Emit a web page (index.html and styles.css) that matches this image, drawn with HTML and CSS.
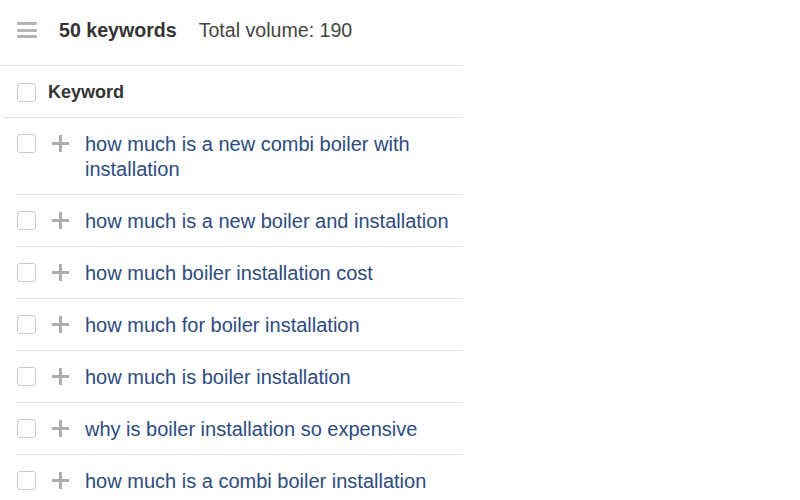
FILE: index.html
```html
<!DOCTYPE html>
<html lang="en">
<head>
    <meta charset="UTF-8">
    <title>Keywords</title>
    <link rel="stylesheet" href="styles.css">
</head>
<body>
    <div class="panel">
        <header class="toolbar">
            <span class="menu-icon"><span></span><span></span><span></span></span>
            <span class="count">50 keywords</span>
            <span class="volume">Total volume: 190</span>
        </header>
        <div class="table-head">
            <span class="check"></span>
            <span class="head-label">Keyword</span>
        </div>
        <ul class="keywords">
            <li><span class="check"></span><span class="plus"></span><a href="#">how much is a new combi boiler with installation</a></li>
            <li><span class="check"></span><span class="plus"></span><a href="#">how much is a new boiler and installation</a></li>
            <li><span class="check"></span><span class="plus"></span><a href="#">how much boiler installation cost</a></li>
            <li><span class="check"></span><span class="plus"></span><a href="#">how much for boiler installation</a></li>
            <li><span class="check"></span><span class="plus"></span><a href="#">how much is boiler installation</a></li>
            <li><span class="check"></span><span class="plus"></span><a href="#">why is boiler installation so expensive</a></li>
            <li><span class="check"></span><span class="plus"></span><a href="#">how much is a combi boiler installation</a></li>
        </ul>
    </div>
</body>
</html>
```
FILE: styles.css
```css
body {
    margin: 0;
    font-family: "Liberation Sans", Arial, sans-serif;
    background: #fff;
    color: #333;
}
.panel {
    width: 463px;
}
.toolbar {
    display: flex;
    align-items: center;
    box-sizing: border-box;
    height: 66px;
    padding: 0 0 5px 17px;
    border-bottom: 1px solid #e4e4e4;
    font-size: 19.6px;
}
.menu-icon {
    display: flex;
    flex-direction: column;
    justify-content: space-between;
    width: 20px;
    height: 16px;
    margin-right: 22px;
}
.menu-icon span {
    height: 3px;
    background: #b4b4b4;
    border-radius: 1px;
}
.count {
    font-weight: bold;
    color: #333;
    margin-right: 22px;
}
.volume {
    color: #444;
}
.table-head {
    display: flex;
    align-items: center;
    box-sizing: border-box;
    height: 52px;
    margin-left: 3px;
    padding: 2px 0 0 14px;
    border-bottom: 1px solid #e4e4e4;
}
.head-label {
    font-weight: bold;
    font-size: 18px;
    color: #333;
    margin-left: 12px;
}
.check {
    flex: none;
    box-sizing: border-box;
    width: 19px;
    height: 19px;
    border: 1px solid #c8c8c8;
    border-radius: 3px;
    background: #fff;
}
.keywords {
    list-style: none;
    margin: 0 0 0 16px;
    padding: 0;
}
.keywords li {
    display: flex;
    align-items: flex-start;
    padding: 14px 0 12px 1px;
    border-bottom: 1px solid #e4e4e4;
    line-height: 25px;
}
.keywords li .check {
    margin-top: 2px;
}
.plus {
    flex: none;
    position: relative;
    width: 17px;
    height: 17px;
    margin: 3px 16px 0 16px;
}
.plus::before,
.plus::after {
    content: "";
    position: absolute;
    background: #adadad;
}
.plus::before {
    left: 0;
    right: 0;
    top: 7px;
    height: 3px;
}
.plus::after {
    top: 0;
    bottom: 0;
    left: 7px;
    width: 3px;
}
.keywords a {
    font-size: 20px;
    color: #2d4b7e;
    text-decoration: none;
    padding-right: 10px;
}
```
